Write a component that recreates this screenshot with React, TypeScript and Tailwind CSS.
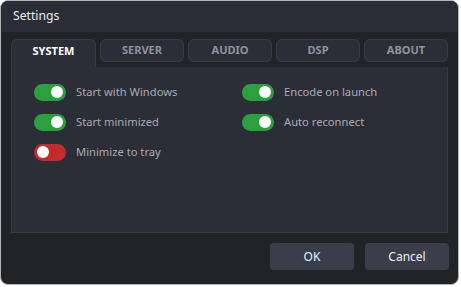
import React, { useState } from "react";

type Opt = { label: string; on: boolean; color?: "green" | "red" };

const leftOpts: Opt[] = [
  { label: "Start with Windows", on: true },
  { label: "Start minimized", on: true },
  { label: "Minimize to tray", on: false, color: "red" },
];

const rightOpts: Opt[] = [
  { label: "Encode on launch", on: true },
  { label: "Auto reconnect", on: true },
];

const tabs = ["SYSTEM", "SERVER", "AUDIO", "DSP", "ABOUT"];

const Toggle = ({ label, on, color }: Opt) => {
  const [val, setVal] = useState(on);
  const red = color === "red";
  return (
    <button
      onClick={() => setVal(!val)}
      className="flex items-center gap-[10px] h-[30px] text-left"
    >
      <span
        className={`w-[32px] h-[17px] rounded-full flex items-center px-[3px] ${
          red ? "bg-[#c42b2b] justify-start" : "bg-[#2aa13c] justify-end"
        }`}
      >
        <span className="w-[12px] h-[12px] rounded-full bg-white" />
      </span>
      <span className="text-[11.2px] text-[#a8abb3] leading-none">{label}</span>
    </button>
  );
};

export default function App() {
  const [tab, setTab] = useState("SYSTEM");
  return (
    <div
      className="w-[461px] h-[287px] bg-white"
      style={{ fontFamily: "'Noto Sans', 'Open Sans', sans-serif" }}
    >
      <div className="w-[459px] h-[285px] rounded-[8px] border border-[#b4b4b4] bg-[#222327] overflow-hidden flex flex-col">
        <div className="h-[31px] bg-[#2a2d36] flex items-center px-[12px] shrink-0">
          <span className="text-[12.2px] text-[#e9eaee]">Settings</span>
        </div>

        <div className="flex flex-col px-[10px] pt-[7px]">
          <div className="flex gap-[4px] h-[28px]">
            {tabs.map((t) =>
              t === tab ? (
                <button
                  key={t}
                  onClick={() => setTab(t)}
                  className="w-[85px] h-[28px] pb-[4px] rounded-t-[6px] border border-b-0 border-[#393c46] bg-[#2b2e37] text-[11px] font-bold text-white"
                >
                  {t}
                </button>
              ) : (
                <button
                  key={t}
                  onClick={() => setTab(t)}
                  className="w-[84px] h-[23px] rounded-[6px] border border-[#393c46] bg-[#2b2e37] text-[11px] font-bold text-[#8f939c]"
                >
                  {t}
                </button>
              )
            )}
          </div>

          <div className="h-[166px] bg-[#2b2e37] border border-t-0 border-[#393c46] flex pl-[22px] pt-[10px]">
            <div className="w-[208px] flex flex-col">
              {leftOpts.map((o) => (
                <Toggle key={o.label} {...o} />
              ))}
            </div>
            <div className="flex flex-col">
              {rightOpts.map((o) => (
                <Toggle key={o.label} {...o} />
              ))}
            </div>
          </div>
        </div>

        <div className="flex justify-end gap-[11px] pr-[9px] pt-[10px]">
          <button className="w-[84px] h-[27px] rounded-[4px] bg-[#3a3e4b] text-[12px] text-[#eef0f4]">
            OK
          </button>
          <button className="w-[84px] h-[27px] rounded-[4px] bg-[#3a3e4b] text-[12px] text-[#eef0f4]">
            Cancel
          </button>
        </div>
      </div>
    </div>
  );
}
